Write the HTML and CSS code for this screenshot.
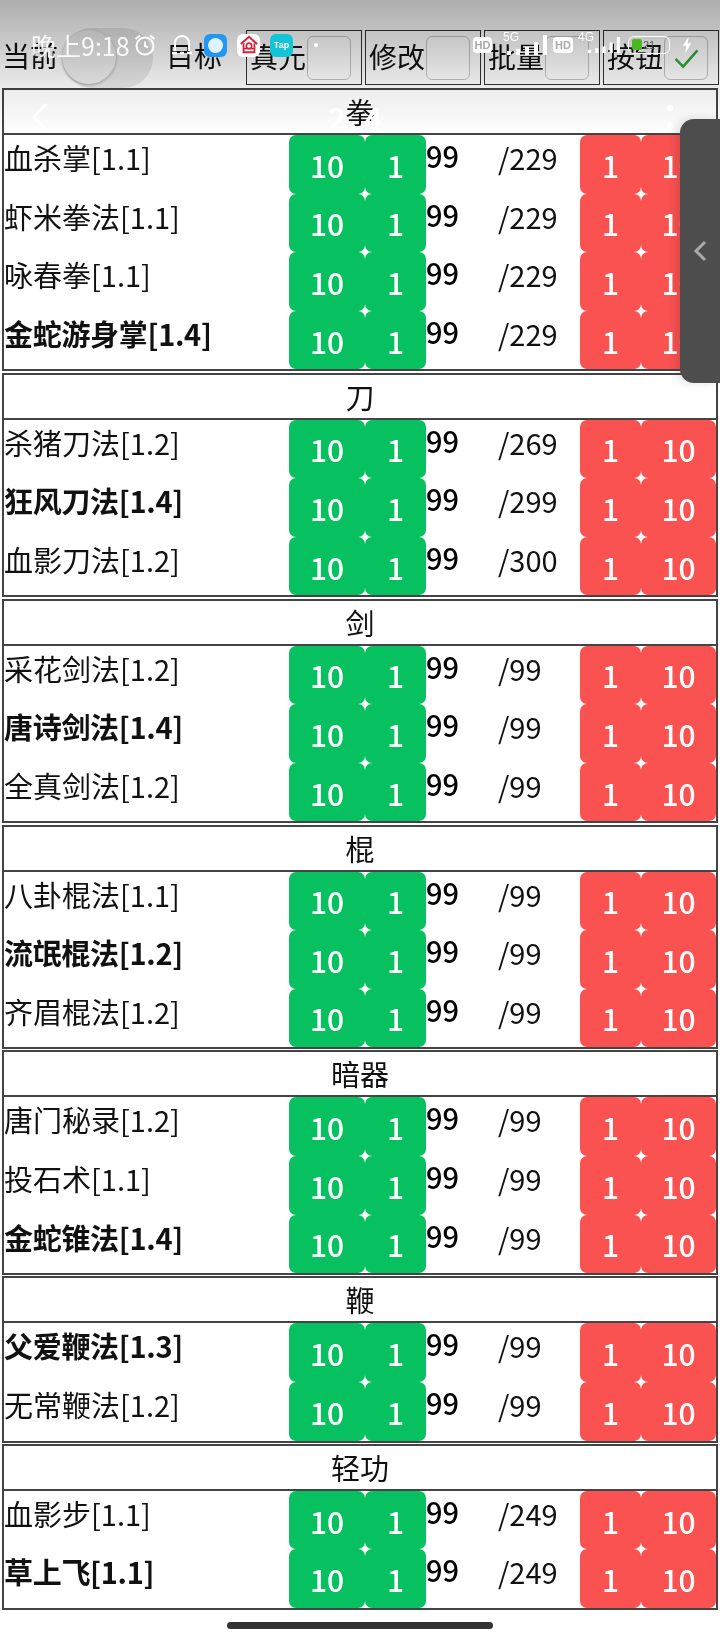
FILE: index.html
```html
<!DOCTYPE html>
<html lang="zh-CN">
<head>
<meta charset="utf-8">
<title>技能</title>
<link rel="stylesheet" href="styles.css">
</head>
<body>
<div class="page">
  <header class="toolbar">
    <span class="label first">当前</span>
    <span class="toggle"><span class="knob"></span></span>
    <span class="label target">目标</span>
    <div class="opts">
      <label class="opt"><span>真元</span><i class="check"></i></label>
      <label class="opt"><span>修改</span><i class="check"></i></label>
      <label class="opt"><span>批量</span><i class="check"></i></label>
      <label class="opt"><span>按钮</span><i class="check"><svg viewBox="0 0 44 44" class="tick"><path d="M11 23l8 8L34 14" fill="none" stroke="#2fa83c" stroke-width="2.6"/></svg></i></label>
    </div>
  </header>

  <section class="group"><h2>拳</h2>
    <div class="row"><span class="name">血杀掌[1.1]</span><b class="btn g">10</b><b class="btn g">1</b><span class="cur">99</span><span class="max">/229</span><b class="btn r">1</b><b class="btn r">10</b></div>
    <div class="row"><span class="name">虾米拳法[1.1]</span><b class="btn g">10</b><b class="btn g">1</b><span class="cur">99</span><span class="max">/229</span><b class="btn r">1</b><b class="btn r">10</b></div>
    <div class="row"><span class="name">咏春拳[1.1]</span><b class="btn g">10</b><b class="btn g">1</b><span class="cur">99</span><span class="max">/229</span><b class="btn r">1</b><b class="btn r">10</b></div>
    <div class="row"><span class="name bold">金蛇游身掌[1.4]</span><b class="btn g">10</b><b class="btn g">1</b><span class="cur">99</span><span class="max">/229</span><b class="btn r">1</b><b class="btn r">10</b></div>
  </section>

  <section class="group"><h2>刀</h2>
    <div class="row"><span class="name">杀猪刀法[1.2]</span><b class="btn g">10</b><b class="btn g">1</b><span class="cur">99</span><span class="max">/269</span><b class="btn r">1</b><b class="btn r">10</b></div>
    <div class="row"><span class="name bold">狂风刀法[1.4]</span><b class="btn g">10</b><b class="btn g">1</b><span class="cur">99</span><span class="max">/299</span><b class="btn r">1</b><b class="btn r">10</b></div>
    <div class="row"><span class="name">血影刀法[1.2]</span><b class="btn g">10</b><b class="btn g">1</b><span class="cur">99</span><span class="max">/300</span><b class="btn r">1</b><b class="btn r">10</b></div>
  </section>

  <section class="group"><h2>剑</h2>
    <div class="row"><span class="name">采花剑法[1.2]</span><b class="btn g">10</b><b class="btn g">1</b><span class="cur">99</span><span class="max">/99</span><b class="btn r">1</b><b class="btn r">10</b></div>
    <div class="row"><span class="name bold">唐诗剑法[1.4]</span><b class="btn g">10</b><b class="btn g">1</b><span class="cur">99</span><span class="max">/99</span><b class="btn r">1</b><b class="btn r">10</b></div>
    <div class="row"><span class="name">全真剑法[1.2]</span><b class="btn g">10</b><b class="btn g">1</b><span class="cur">99</span><span class="max">/99</span><b class="btn r">1</b><b class="btn r">10</b></div>
  </section>

  <section class="group"><h2>棍</h2>
    <div class="row"><span class="name">八卦棍法[1.1]</span><b class="btn g">10</b><b class="btn g">1</b><span class="cur">99</span><span class="max">/99</span><b class="btn r">1</b><b class="btn r">10</b></div>
    <div class="row"><span class="name bold">流氓棍法[1.2]</span><b class="btn g">10</b><b class="btn g">1</b><span class="cur">99</span><span class="max">/99</span><b class="btn r">1</b><b class="btn r">10</b></div>
    <div class="row"><span class="name">齐眉棍法[1.2]</span><b class="btn g">10</b><b class="btn g">1</b><span class="cur">99</span><span class="max">/99</span><b class="btn r">1</b><b class="btn r">10</b></div>
  </section>

  <section class="group"><h2>暗器</h2>
    <div class="row"><span class="name">唐门秘录[1.2]</span><b class="btn g">10</b><b class="btn g">1</b><span class="cur">99</span><span class="max">/99</span><b class="btn r">1</b><b class="btn r">10</b></div>
    <div class="row"><span class="name">投石术[1.1]</span><b class="btn g">10</b><b class="btn g">1</b><span class="cur">99</span><span class="max">/99</span><b class="btn r">1</b><b class="btn r">10</b></div>
    <div class="row"><span class="name bold">金蛇锥法[1.4]</span><b class="btn g">10</b><b class="btn g">1</b><span class="cur">99</span><span class="max">/99</span><b class="btn r">1</b><b class="btn r">10</b></div>
  </section>

  <section class="group"><h2>鞭</h2>
    <div class="row"><span class="name bold">父爱鞭法[1.3]</span><b class="btn g">10</b><b class="btn g">1</b><span class="cur">99</span><span class="max">/99</span><b class="btn r">1</b><b class="btn r">10</b></div>
    <div class="row"><span class="name">无常鞭法[1.2]</span><b class="btn g">10</b><b class="btn g">1</b><span class="cur">99</span><span class="max">/99</span><b class="btn r">1</b><b class="btn r">10</b></div>
  </section>

  <section class="group"><h2>轻功</h2>
    <div class="row"><span class="name">血影步[1.1]</span><b class="btn g">10</b><b class="btn g">1</b><span class="cur">99</span><span class="max">/249</span><b class="btn r">1</b><b class="btn r">10</b></div>
    <div class="row"><span class="name bold">草上飞[1.1]</span><b class="btn g">10</b><b class="btn g">1</b><span class="cur">99</span><span class="max">/249</span><b class="btn r">1</b><b class="btn r">10</b></div>
  </section>
</div>

<div class="scrim"></div>

<div class="status">
  <span class="time">晚上9:18</span>
  <svg class="ic" viewBox="0 0 24 24"><circle cx="12" cy="13" r="8.5" fill="none" stroke="#fff" stroke-width="2"/><path d="M12 8.5V13l3 1.5M2.5 6L7 2.5M21.5 6L17 2.5" fill="none" stroke="#fff" stroke-width="2"/></svg>
  <svg class="bell" viewBox="0 0 20 22"><path d="M3 17V9a7 7 0 0 1 14 0v8" fill="none" stroke="#fff" stroke-width="2"/><path d="M0 19h5M8 19h4M15 19h5" stroke="#fff" stroke-width="2.4"/></svg>
  <span class="app blue"><i></i></span>
  <span class="app home"><svg viewBox="0 0 22 22"><path d="M2 10l9-8 9 8" fill="none" stroke="#d5213c" stroke-width="2.2"/><path d="M5 9v10h12V9" fill="none" stroke="#d5213c" stroke-width="2"/><circle cx="11" cy="12" r="3" fill="none" stroke="#d5213c" stroke-width="1.8"/><path d="M5 15h12" stroke="#d5213c" stroke-width="1.6"/></svg></span>
  <span class="app tap">Tap</span>
  <i class="dot"></i>
  <span class="spacer"></span>
  <span class="hd">HD</span>
  <span class="net fiveg">5G<svg viewBox="0 0 40 20"><path d="M2 20v-4M11 20v-6M20 20v-8M29 20V7M38 20V0" stroke="#fff" stroke-width="4"/></svg></span>
  <span class="hd second">HD</span>
  <span class="net fourg">4G<svg viewBox="0 0 40 20"><path d="M2 20v-4M11 20v-6M20 20v-8M29 20V7M38 20V0" stroke="#fff" stroke-width="4"/></svg></span>
  <span class="batt"><i></i>21</span>
  <svg class="bolt" viewBox="0 0 12 20"><path d="M8 0L1 11h4l-1 9 7-12H7z" fill="#fff"/></svg>
</div>

<div class="appbar">
  <svg class="back" viewBox="0 0 18 30"><path d="M15 2L3 15l12 13" fill="none" stroke="#fff" stroke-width="3"/></svg>
  <span class="apptitle">2 4</span>
  <span class="more"><i></i><i></i></span>
</div>

<aside class="handle"><svg viewBox="0 0 14 22"><path d="M12 2L3 11l9 9" fill="none" stroke="#a9a9a9" stroke-width="3"/></svg></aside>
<div class="homebar"></div>
</body>
</html>
```

FILE: styles.css
```css
* { box-sizing: border-box; }
html, body { margin: 0; padding: 0; background: #fff; }
body {
  width: 720px; height: 1640px; overflow: hidden; position: relative;
  font-family: "Noto Sans CJK SC", "Noto Sans", sans-serif;
  color: #111;
}
.page { padding: 30px 2px 0 2px; }

.toolbar { display: flex; align-items: center; height: 55px; margin-bottom: 3px; font-size: 28px; line-height: 1; }
.label { padding-bottom: 6px; }
.label.first { width: 60px; flex: none; }
.toggle { width: 91px; height: 60px; border-radius: 30px; background: #e8e8e8; position: relative; display: block; flex: none; }
.knob { position: absolute; left: 0; top: 2px; width: 54px; height: 54px; border-radius: 50%; background: #efefef; box-shadow: 0 1px 3px rgba(0,0,0,.3); }
.label.target { margin-left: 13px; width: 56px; flex: none; }
.opts { display: flex; gap: 3.5px; margin-left: 24px; flex: none; }
.opt { width: 115.5px; height: 55px; border: 1.5px solid #333; display: flex; align-items: center; justify-content: space-between; padding: 0 10px 0 3px; }
.opt span { padding-bottom: 4px; }
.check { width: 44px; height: 44px; border: 1.5px solid #c4c4c4; border-radius: 6px; display: block; flex: none; }
.tick { width: 100%; height: 100%; display: block; }

.group { border: 2px solid #444; margin-bottom: 1.2px; background: #fff; }
.group h2 { margin: 0; height: 45px; border-bottom: 2px solid #444; font-size: 29px; font-weight: 400; line-height: 43px; text-align: center; }

.row { display: grid; grid-template-columns: 285px 76px 61px 71px 83px 61px 75px; height: 58.6px; }
.name, .max { font-size: 29px; line-height: 1; padding-top: 8px; white-space: nowrap; }
.bold { font-weight: 700; letter-spacing: -0.3px; }
.cur { font-size: 29px; line-height: 1; padding-top: 6px; font-weight: 500; color: #000; }
.max { padding-left: 1px; }
.btn { display: flex; align-items: center; justify-content: center; font-size: 30px; font-weight: 500; color: #fff; border-radius: 7px; padding-top: 1px; }
.g { background: #07c160; }
.r { background: #fa5151; }

.scrim { position: absolute; left: 0; top: 0; width: 720px; height: 135px; mix-blend-mode: multiply; background: linear-gradient(#adadad, #d6d6d6 60px, #ececec 88px, #fff 135px); }

.status { position: absolute; left: 31px; right: 28px; top: 30px; height: 30px; display: flex; align-items: center; color: #fff; }
.time { font-size: 25px; line-height: 1; opacity: .9; width: 97px; flex: none; white-space: nowrap; }
.ic { width: 24px; height: 24px; margin-left: 5px; flex: none; }
.bell { width: 20px; height: 22px; margin-left: 15px; flex: none; }
.app { width: 23px; height: 23px; border-radius: 6px; margin-left: 10px; display: flex; align-items: center; justify-content: center; flex: none; }
.app.blue { background: #2196f3; margin-left: 12px; }
.app.blue i { width: 15px; height: 15px; border-radius: 50%; background: #dff1ff; display: block; }
.app.home { background: #fff; }
.app.home svg { width: 20px; height: 20px; }
.app.tap { background: #12c4d8; font: 700 9px "Liberation Sans", sans-serif; color: #fff; }
.dot { width: 4px; height: 4px; border-radius: 50%; background: #fff; margin-left: 21px; display: block; flex: none; }
.spacer { flex: 1; }
.hd { font: 700 11px "Liberation Sans", sans-serif; color: #aaa; background: #fff; border-radius: 4px; width: 19px; height: 16px; line-height: 16px; text-align: center; flex: none; }
.hd.second { margin-left: 5px; width: 20px; }
.net { position: relative; width: 46px; height: 28px; font: 400 12px "Liberation Sans", sans-serif; display: block; margin-left: 10px; padding-left: 1px; line-height: 12px; flex: none; }
.net.fourg { width: 45px; margin-left: 4px; }
.net svg { position: absolute; left: 5px; bottom: 4px; width: 40px; height: 20px; }
.net.fourg svg { left: 11px; width: 32px; }
.batt { width: 42px; height: 18px; margin-left: 6px; border: 1.5px solid #fff; border-radius: 6px; font: 400 11px "Liberation Sans", sans-serif; color: #555; display: flex; align-items: center; justify-content: center; position: relative; flex: none; }
.batt i { position: absolute; left: 3px; top: 2px; width: 10px; height: 11px; background: #4cb81f; border-radius: 2px; }
.bolt { width: 10px; height: 20px; margin-left: 12px; flex: none; }

.appbar { position: absolute; left: 31px; right: 47px; top: 100px; height: 34px; display: flex; align-items: center; justify-content: space-between; }
.back { width: 18px; height: 30px; flex: none; }
.apptitle { color: #fff; font-size: 30px; font-weight: 700; line-height: 1; letter-spacing: 6px; white-space: nowrap; }
.more { display: flex; flex-direction: column; gap: 12px; flex: none; }
.more i { width: 6px; height: 6px; border-radius: 50%; background: #fff; display: block; }

.handle { position: absolute; left: 680px; top: 119px; width: 40px; height: 264px; background: #4d4d4d; border-radius: 14px 0 0 14px; box-shadow: -4px 0 10px rgba(0,0,0,.12); display: flex; align-items: center; padding-left: 13px; }
.handle svg { width: 14px; height: 22px; }
.homebar { position: absolute; left: 227px; top: 1622px; width: 266px; height: 7px; border-radius: 4px; background: #333; }
```
